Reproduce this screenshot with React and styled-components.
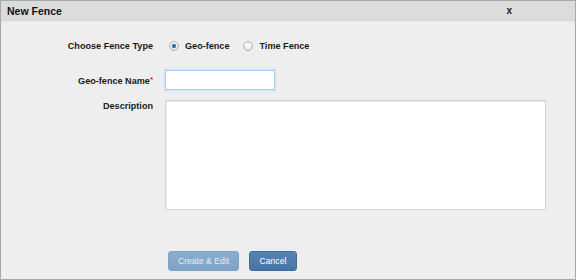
import React from "react";
import styled, { createGlobalStyle } from "styled-components";

const Global = createGlobalStyle`
  html, body { margin: 0; padding: 0; background: #ffffff; }
  * { box-sizing: border-box; }
`;

const Dialog = styled.div`
  width: 576px;
  height: 280px;
  border: 1px solid #a9a9a9;
  background: #eeeeee;
  display: flex;
  flex-direction: column;
  font-family: "Liberation Sans", Arial, sans-serif;
  color: #1a1a1a;
`;

const Header = styled.div`
  height: 20px;
  flex: none;
  background: #dcdcdc;
  border-bottom: 1px solid #d3d3d3;
  display: flex;
  align-items: center;
  justify-content: space-between;
  padding: 0 63px 0 6px;
`;

const Title = styled.div`
  font-size: 10.5px;
  font-weight: bold;
  color: #111;
`;

const Close = styled.div`
  font-size: 10px;
  font-weight: bold;
  color: #1a1a2a;
  cursor: pointer;
`;

const Body = styled.div`
  flex: 1;
  display: flex;
  flex-direction: column;
  padding-top: 15px;
`;

const Row = styled.div`
  display: grid;
  grid-template-columns: 152px 1fr;
  column-gap: 12px;
  align-items: ${(p) => (p.$top ? "start" : "center")};
  margin-bottom: ${(p) => p.$mb || 0}px;
  min-height: ${(p) => p.$h || 20}px;
`;

const Label = styled.div`
  text-align: right;
  font-size: 9.1px;
  font-weight: bold;
  color: #1a1a1a;
  padding-top: ${(p) => p.$pt || 0}px;
`;

const Req = styled.span`
  color: #e02020;
  font-size: 8px;
  vertical-align: 2px;
`;

const RadioGroup = styled.div`
  display: flex;
  align-items: center;
  padding-left: 4px;
`;

const RadioOption = styled.label`
  display: flex;
  align-items: center;
  gap: 6px;
  margin-right: 14px;
  font-size: 9.1px;
  font-weight: bold;
  color: #1a1a1a;
`;

const RadioCircle = styled.span`
  width: 10px;
  height: 10px;
  border-radius: 50%;
  border: 1px solid #b4b4b4;
  background: radial-gradient(circle at 50% 40%, #ffffff 0%, #e6e6e6 70%, #d6d6d6 100%);
  display: flex;
  align-items: center;
  justify-content: center;
  &::after {
    content: "";
    width: 4px;
    height: 4px;
    border-radius: 50%;
    background: ${(p) => (p.$checked ? "#2d6fa8" : "transparent")};
    box-shadow: ${(p) => (p.$checked ? "0 0 1px #5a9ad0" : "none")};
  }
`;

const TextInput = styled.input`
  width: 110px;
  height: 20px;
  border: 1px solid #a6cbee;
  box-shadow: 0 0 2px 1px #cfe2f4;
  background: #fff;
  outline: none;
  padding: 0 4px;
  font-family: inherit;
`;

const TextArea = styled.textarea`
  width: 381px;
  height: 110px;
  border: 1px solid #d6d6d6;
  border-top-color: #cfcfcf;
  box-shadow: inset 1px 1px 0 #e6e6e6;
  background: #fff;
  resize: none;
  outline: none;
  display: block;
  font-family: inherit;
`;

const Actions = styled.div`
  display: flex;
  gap: 10px;
  padding-left: 167px;
  margin-top: 41px;
`;

const Button = styled.button`
  height: 20px;
  width: ${(p) => p.$w}px;
  border-radius: 3px;
  border: 1px solid ${(p) => (p.$disabled ? "#7ea2c2" : "#3f6c99")};
  background: ${(p) =>
    p.$disabled
      ? "linear-gradient(#8caed0, #7ea3c5)"
      : "linear-gradient(#5584b2, #4875a3)"};
  color: ${(p) => (p.$disabled ? "#e4edf5" : "#ffffff")};
  font-family: "Liberation Sans", Arial, sans-serif;
  font-size: 8.6px;
  padding: 0;
  cursor: pointer;
`;

export default function App() {
  return (
    <>
      <Global />
      <Dialog>
        <Header>
          <Title>New Fence</Title>
          <Close>x</Close>
        </Header>
        <Body>
          <Row $mb={14}>
            <Label>Choose Fence Type</Label>
            <RadioGroup>
              <RadioOption>
                <RadioCircle $checked />
                Geo-fence
              </RadioOption>
              <RadioOption>
                <RadioCircle />
                Time Fence
              </RadioOption>
            </RadioGroup>
          </Row>
          <Row $mb={10}>
            <Label>
              Geo-fence Name<Req>*</Req>
            </Label>
            <div>
              <TextInput />
            </div>
          </Row>
          <Row $top>
            <Label $pt={1}>Description</Label>
            <TextArea />
          </Row>
          <Actions>
            <Button $disabled $w={71}>Create &amp; Edit</Button>
            <Button $w={48}>Cancel</Button>
          </Actions>
        </Body>
      </Dialog>
    </>
  );
}
